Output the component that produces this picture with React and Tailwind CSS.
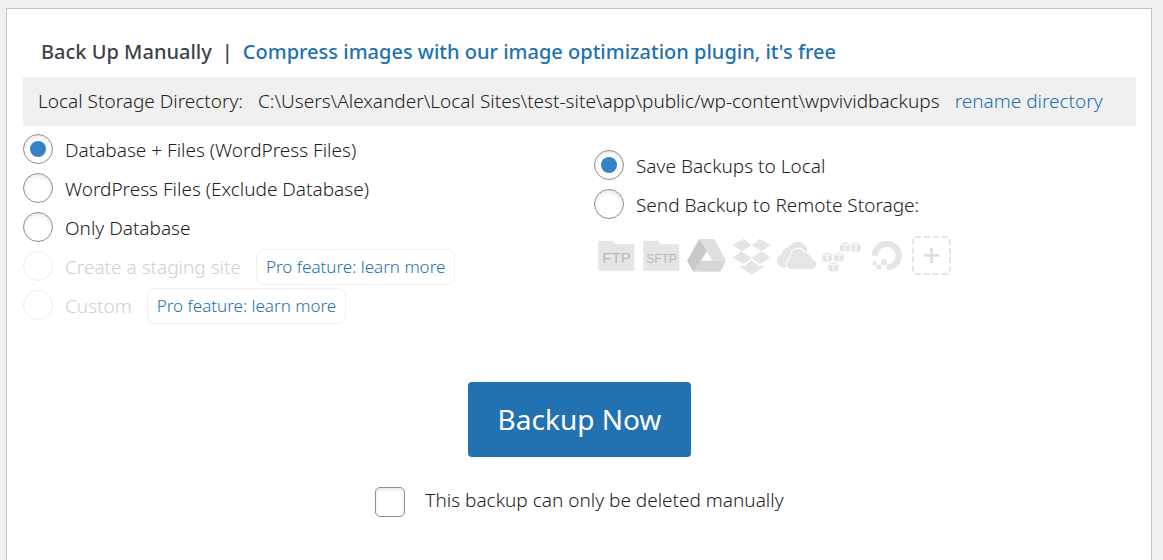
import { useState } from 'react';
import clsx from 'clsx';

const backupTypes = [
    { id: 'files_db', label: 'Database + Files (WordPress Files)' },
    { id: 'files', label: 'WordPress Files (Exclude Database)' },
    { id: 'db', label: 'Only Database' },
    { id: 'staging', label: 'Create a staging site', pro: true },
    { id: 'custom', label: 'Custom', pro: true },
];

const destinations = [
    { id: 'local', label: 'Save Backups to Local' },
    { id: 'remote', label: 'Send Backup to Remote Storage:' },
];

const RadioRow = ({ name, item, checked, onChange }) => (
    <div className="flex min-h-[39px] items-center">
        <label className={clsx("flex items-center gap-3", item.pro && "text-[#cfcfcf]")}>
            <input
                type="radio"
                name={name}
                value={item.id}
                checked={checked}
                disabled={item.pro}
                onChange={() => onChange(item.id)}
                className={clsx(
                    "grid size-[30px] shrink-0 appearance-none place-content-center rounded-full border bg-white before:size-4 before:rounded-full checked:before:bg-[#3582c4]",
                    item.pro ? "border-[#ececec]" : "border-[#8c8f94] shadow-[inset_0_2px_4px_rgba(0,0,0,0.1)]"
                )}
            />
            <span className="pt-[2px]">{item.label}</span>
        </label>
        {item.pro && (
            <a href="#pro" className="ml-[15px] mt-[2px] rounded-lg border border-[#f0f0f0] px-[9px] py-1 text-[17px] leading-[26px] text-[#2271b1]">
                Pro feature: learn more
            </a>
        )}
    </div>
);

const StorageIcon = ({ title, children }) => (
    <svg viewBox="0 0 40 40" className="size-10 shrink-0 fill-[#e5e5e5]" role="img" aria-label={title}>
        {children}
    </svg>
);

const Folder = () => (
    <path d="M3.5 4.7H16Q17 4.7 17.5 5.5L19.5 8.2H37.2Q38.3 8.2 38.3 9.3V34.7H2.3V6Q2.3 4.7 3.5 4.7Z" />
);

const Cube = ({ x, y }) => (
    <g transform={`translate(${x} ${y})`}>
        <path d="M5 0L9.5 1.6L5 3.2L0.5 1.6Z" fill="#ededed" />
        <path d="M0 2.2L4.5 3.8V10L0 8.4Z" />
        <path d="M10 2.2L5.5 3.8V10L10 8.4Z" />
    </g>
);

const RemoteStorages = () => (
    <div className="flex gap-[5px] pl-[2px]">
        <StorageIcon title="FTP">
            <Folder />
            <text x="20.5" y="27" textAnchor="middle" className="fill-[#b8b8b8] font-['Liberation_Sans',sans-serif] text-[15px] font-normal">FTP</text>
        </StorageIcon>
        <StorageIcon title="SFTP">
            <Folder />
            <text x="20.5" y="27" textAnchor="middle" className="fill-[#b8b8b8] font-['Liberation_Sans',sans-serif] text-[12px] font-normal">SFTP</text>
        </StorageIcon>
        <StorageIcon title="Google Drive">
            <path d="M13.3 3H28.3L40 24.7H26.3Z" fill="#dfdfdf" />
            <path d="M13.3 3L21 15.3L7.3 35.7L1 24.7Z" fill="#c9c9c9" />
            <path d="M14.2 24.7H40L34.3 35.7H7.3Z" fill="#d6d6d6" />
        </StorageIcon>
        <StorageIcon title="Dropbox">
            <path d="M12.7 2.7L20.7 9L10.7 15.3L1.7 9Z" />
            <path d="M28.7 2.7L20.7 9L30.7 15.3L39.7 9Z" />
            <path d="M10.7 15.3L20.7 22L12.7 28L1.7 21.7Z" />
            <path d="M30.7 15.3L20.7 22L28.7 28L39.7 21.7Z" />
            <path d="M20.7 24.6L28.7 30.6L32.4 29.4V31L20.7 38.7L9 31V29.4L12.7 30.6Z" />
        </StorageIcon>
        <StorageIcon title="OneDrive">
            <path d="M8 31.5C3.5 31.5 1 28.5 1 25C1 21.5 3.5 19 6.3 18.6C5.8 14.5 8.8 11.5 12.5 11.8C14 8 18 6 22 6C26.5 6 30 9 31 13L32 20L14 31.5Z" />
            <path
                d="M15.5 33C12.5 33 10.7 30.5 10.7 28C10.7 25 12.5 23 14.7 22.5C14.2 17 17 13 21.5 12.7C25 12.5 27.5 14.5 28.7 17.3C32.5 16.5 35.5 19.5 35.5 23C38.5 23.3 40 25.5 40 28C40 30.7 38 33 35.5 33Z"
                stroke="#fff"
                strokeWidth="2"
                paintOrder="stroke"
            />
        </StorageIcon>
        <StorageIcon title="Amazon S3">
            <Cube x={19} y={6} />
            <Cube x={30} y={6} />
            <Cube x={1.3} y={16.2} />
            <Cube x={13} y={16.2} />
            <Cube x={7.3} y={25.9} />
        </StorageIcon>
        <StorageIcon title="DigitalOcean">
            <path d="M8.7 19.7A12 12 0 1 1 20.7 31.7" fill="none" stroke="#e5e5e5" strokeWidth="6" />
            <path d="M15 23.3H20.7V29H15ZM10.5 29H15V33.3H10.5ZM6.8 25.5H10.5V29H6.8Z" />
        </StorageIcon>
        <StorageIcon title="Add a storage">
            <rect x="2" y="1" width="37" height="37" rx="2" fill="none" stroke="#e5e5e5" strokeWidth="2" strokeDasharray="6 3" />
            <path d="M20.5 12V27M13 19.5H28" stroke="#dcdcdc" strokeWidth="2.5" />
        </StorageIcon>
    </div>
);

const App = () => {
    const [type, setType] = useState('files_db');
    const [destination, setDestination] = useState('local');
    const [locked, setLocked] = useState(false);

    return (
        <div className="flex min-h-screen flex-col bg-[#f0f0f1] pl-[6px] pr-[11px] pt-2 font-['Noto_Sans','Open_Sans',sans-serif] text-[19px] font-light leading-[26px] text-[#222]">
            <main className="flex-1 border border-b-0 border-[#c3c4c7] bg-white pl-4 pr-[15px] pt-[30px]">
                <h2 className="flex gap-[10px] pl-[18px] text-[20px] font-medium text-[#3c434a]">
                    <span>Back Up Manually</span>
                    <span>|</span>
                    <a href="#image-plugin" className="text-[#2271b1]">
                        Compress images with our image optimization plugin, it's free
                    </a>
                </h2>

                <div className="mt-3 flex gap-[15px] bg-[#f0f0f0] px-[15px] py-3 leading-[25px]">
                    <span>Local Storage Directory:</span>
                    <span>C:\Users\Alexander\Local Sites\test-site\app\public/wp-content\wpvividbackups</span>
                    <a href="#rename" className="text-[#2271b1]">rename directory</a>
                </div>

                <div className="grid grid-cols-[571fr_542fr] pt-[3px]">
                    <fieldset>
                        {backupTypes.map((item) => (
                            <RadioRow key={item.id} name="backup_type" item={item} checked={type === item.id} onChange={setType} />
                        ))}
                    </fieldset>
                    <fieldset className="pt-4">
                        {destinations.map((item) => (
                            <RadioRow key={item.id} name="destination" item={item} checked={destination === item.id} onChange={setDestination} />
                        ))}
                        <div className="mt-[13px]">
                            <RemoteStorages />
                        </div>
                    </fieldset>
                </div>

                <div className="mt-[58px] flex flex-col items-center">
                    <button type="button" className="rounded bg-[#2271b1] px-[30px] py-4 text-[28px] font-normal leading-[43px] text-white">
                        Backup Now
                    </button>
                    <label className="mt-[30px] flex items-center gap-5">
                        <input
                            type="checkbox"
                            checked={locked}
                            onChange={(e) => setLocked(e.target.checked)}
                            className="size-[30px] appearance-none rounded-[5px] border border-[#8c8f94] bg-white shadow-[inset_0_2px_4px_rgba(0,0,0,0.1)] checked:bg-[#3582c4]"
                        />
                        <span className="pb-1">This backup can only be deleted manually</span>
                    </label>
                </div>
            </main>
        </div>
    );
};

export default App;
